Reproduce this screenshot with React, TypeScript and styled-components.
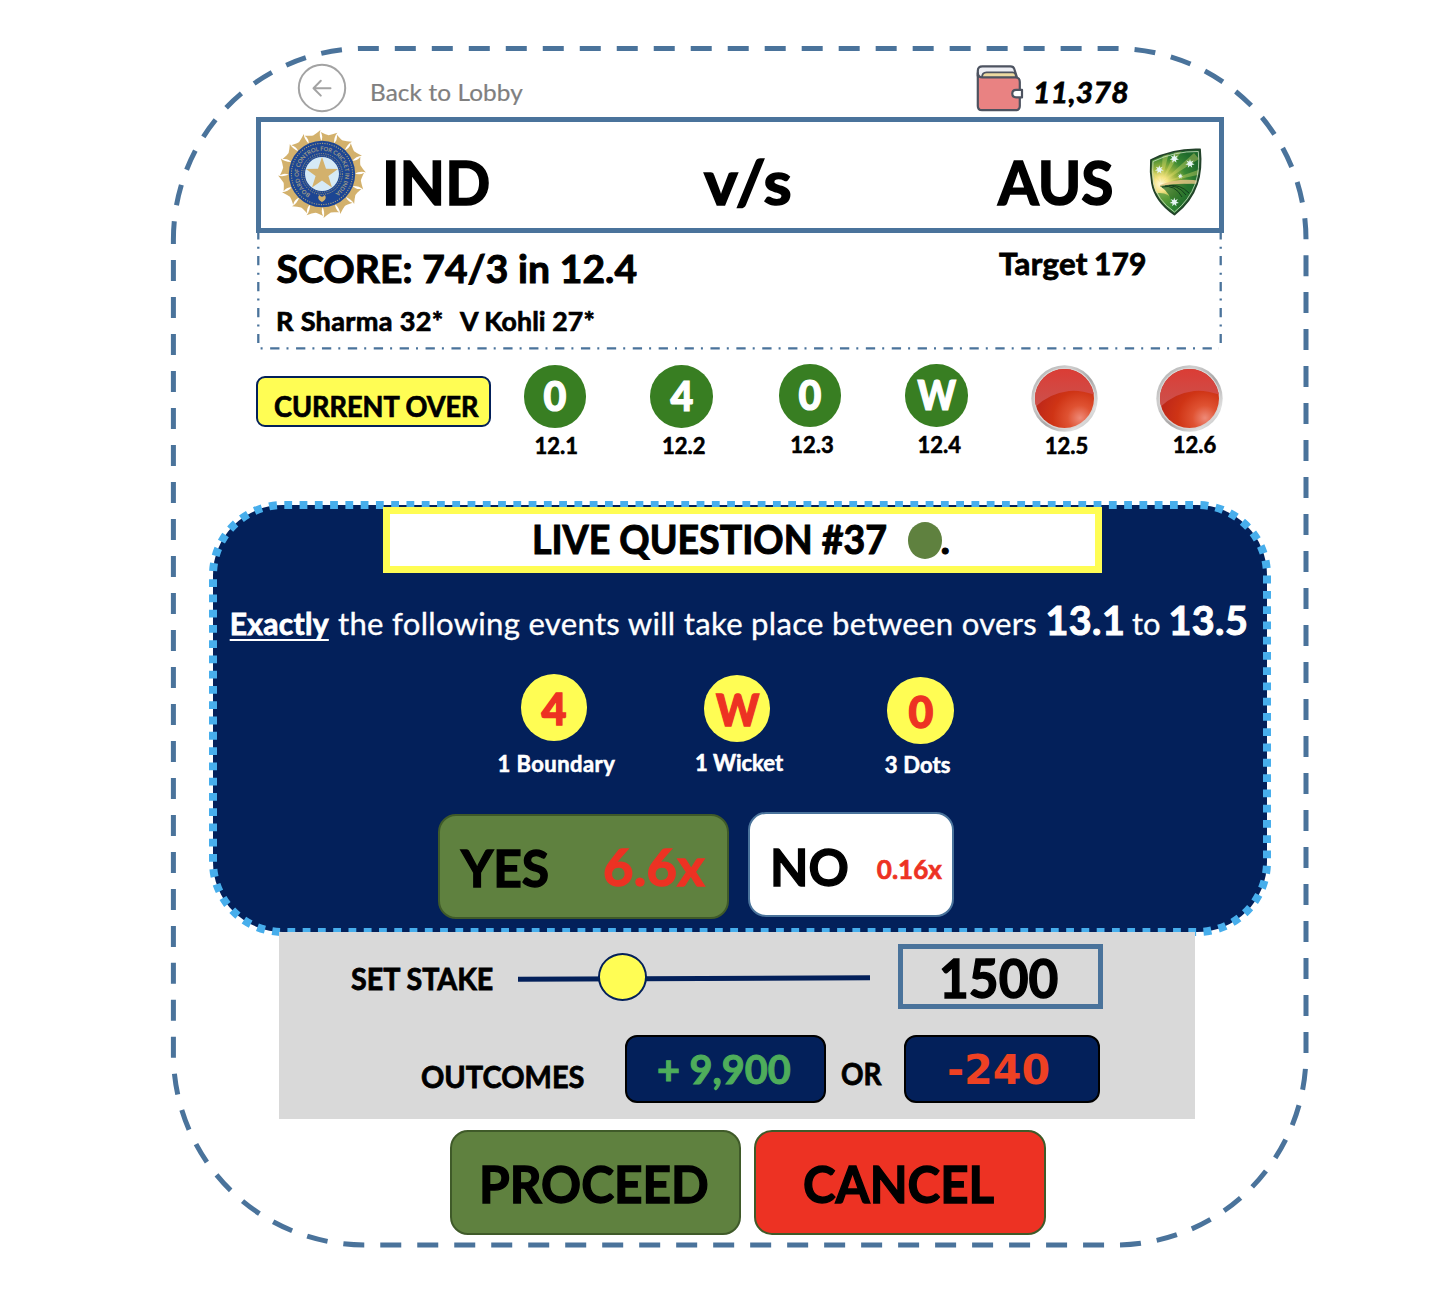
import React from "react";
import styled, { createGlobalStyle } from "styled-components";

const c = {
  steel: "#4a739b",
  navy: "#03205a",
  sky: "#47aeec",
  yellow: "#fffd54",
  red: "#ed3223",
  green: "#5f813f",
  greenEdge: "#3f5a29",
  ball: "#387e22",
  grey: "#d9d9d9",
};

const Global = createGlobalStyle`
  * { box-sizing: border-box; }
  body { margin: 0; background: #fff; color: #000; font-family: Lato, Carlito, sans-serif; }
`;

const Page = styled.main`
  position: relative;
  width: 1450px;
  height: 1316px;
  padding-top: 64px;
  overflow: hidden;
  display: flex;
  flex-direction: column;
  align-items: flex-start;
`;

const Outline = styled.svg`
  position: absolute;
  left: 0;
  top: 0;
  overflow: visible;
  pointer-events: none;
`;

interface LabelProps {
  $size: number;
  $slot?: number;
  $mt?: number;
  $ml?: number;
  $track?: number;
  $squeeze?: number;
  $color?: string;
  $weight?: number;
}

/* A single line of text; $slot fixes the room it takes up in its row. */
const Label = styled.span<LabelProps>`
  display: block;
  flex: none;
  width: ${(p) => (p.$slot ? `${p.$slot}px` : "auto")};
  margin: ${(p) => p.$mt ?? 0}px 0 0 ${(p) => p.$ml ?? 0}px;
  font-size: ${(p) => p.$size}px;
  line-height: 1;
  font-weight: ${(p) => p.$weight ?? 700};
  -webkit-text-stroke: ${(p) => (p.$weight === 400 ? 0.01 : 0.026)}em currentColor;
  letter-spacing: ${(p) => p.$track ?? 0}px;
  color: ${(p) => p.$color ?? "#000"};
  white-space: pre;
  transform: ${(p) => (p.$squeeze ? `scaleX(${p.$squeeze})` : "none")};
  transform-origin: left center;
`;

const Italic = styled(Label)`
  font-style: italic;
`;

const TopBar = styled.header`
  display: flex;
  align-items: flex-start;
  height: 53px;
  margin-left: 298px;
`;

const Icon = styled.svg<{ $mt?: number; $ml?: number }>`
  display: block;
  flex: none;
  overflow: visible;
  margin: ${(p) => p.$mt ?? 0}px 0 0 ${(p) => p.$ml ?? 0}px;
`;

const MatchBar = styled.section`
  display: flex;
  align-items: flex-start;
  width: 967.5px;
  height: 116px;
  margin-left: 256px;
  border: 5px solid ${c.steel};
`;

const ScoreBox = styled.section`
  position: relative;
  display: flex;
  align-items: flex-start;
  width: 967px;
  height: 117px;
  margin-left: 256px;
  padding: 15px 0 0 20.5px;
`;

const ScoreColumn = styled.div`
  width: 722.5px;
`;

const Line = styled.div`
  display: flex;
  align-items: flex-start;
`;

const OverRow = styled.section`
  display: flex;
  align-items: flex-start;
  height: 155.3px;
  margin-left: 256px;
`;

const OverBadge = styled.div`
  width: 235px;
  height: 50.5px;
  margin-top: 26px;
  padding: 14px 0 0 16px;
  border: 2px solid ${c.navy};
  border-radius: 9px;
  background: ${c.yellow};
`;

const Delivery = styled.div<{ $ml: number; $mt: number; $w: number }>`
  display: flex;
  flex-direction: column;
  align-items: center;
  width: ${(p) => p.$w}px;
  margin: ${(p) => p.$mt}px 0 0 ${(p) => p.$ml}px;
`;

const Disc = styled.div<{ $d: number; $bg: string; $color: string; $size: number; $pt: number; $squeeze: number }>`
  display: flex;
  justify-content: center;
  align-items: flex-start;
  width: ${(p) => p.$d}px;
  height: ${(p) => p.$d}px;
  padding-top: ${(p) => p.$pt}px;
  border-radius: 50%;
  background: ${(p) => p.$bg};
  color: ${(p) => p.$color};
  font-size: ${(p) => p.$size}px;
  font-weight: 700;
  line-height: 1;
  -webkit-text-stroke: 0.03em currentColor;
  & > b {
    transform: scaleX(${(p) => p.$squeeze});
  }
`;

const Caption = styled.div<{ $mt: number; $shift: number; $track?: number; $color?: string }>`
  margin: ${(p) => p.$mt}px 0 0 ${(p) => p.$shift * 2}px;
  font-size: 22px;
  font-weight: 700;
  line-height: 1;
  -webkit-text-stroke: 0.026em currentColor;
  letter-spacing: ${(p) => p.$track ?? 0}px;
  color: ${(p) => p.$color ?? "#000"};
  white-space: nowrap;
`;

const Question = styled.section`
  position: relative;
  width: 1054px;
  height: 427.2px;
  margin-left: 213px;
  border-radius: 70px;
  background: ${c.navy};
`;

const Title = styled.div`
  position: relative;
  display: flex;
  align-items: flex-start;
  width: 719px;
  height: 66px;
  margin-left: 170.3px;
  top: 2.2px;
  padding-left: 142px;
  border: 7.5px solid ${c.yellow};
  background: #fff;
`;

const LiveDot = styled.i`
  display: block;
  width: 34px;
  height: 36.5px;
  margin-top: 8px;
  border-radius: 50%;
  background: ${c.green};
`;

const Sentence = styled.p`
  display: flex;
  align-items: baseline;
  margin: 28.7px 0 0 16.7px;
  height: 40px;
`;

const Underlined = styled(Label)`
  text-decoration: underline;
  text-decoration-thickness: 2.3px;
  text-underline-offset: 4px;
  text-decoration-skip-ink: none;
`;

const Events = styled.div`
  display: flex;
  align-items: flex-start;
  height: 139px;
  margin: 34.5px 0 0 307.8px;
`;

const Choices = styled.div`
  display: flex;
  align-items: flex-start;
  margin-left: 224.5px;
`;

const Button = styled.div<{ $w: number; $bg: string; $edge: string; $ml?: number; $mt?: number }>`
  display: flex;
  align-items: flex-start;
  flex: none;
  width: ${(p) => p.$w}px;
  height: 105px;
  margin: ${(p) => p.$mt ?? 0}px 0 0 ${(p) => p.$ml ?? 0}px;
  border: 2.5px solid ${(p) => p.$edge};
  border-radius: 18px;
  background: ${(p) => p.$bg};
`;

const StakePanel = styled.section`
  position: relative;
  width: 915.7px;
  height: 187px;
  margin-left: 279px;
  background: ${c.grey};
`;

const StakeRow = styled.div`
  display: flex;
  align-items: flex-start;
  height: 102.5px;
  padding: 11.5px 0 0 72px;
`;

const Slider = styled.div`
  position: relative;
  width: 352px;
  height: 48px;
  margin-top: 9.5px;
`;

const Rail = styled.div`
  height: 5px;
  margin-top: 22.5px;
  background: ${c.navy};
  transform: rotate(-0.25deg);
`;

const Thumb = styled.div`
  position: absolute;
  left: 79.5px;
  top: -0.5px;
  width: 49.5px;
  height: 48px;
  border: 2px solid ${c.navy};
  border-radius: 50%;
  background: ${c.yellow};
`;

const StakeValue = styled.div`
  width: 205px;
  height: 65px;
  margin-left: 27.5px;
  padding: 2.5px 0 0 36.5px;
  border: 5px solid ${c.steel};
`;

const OutcomeRow = styled.div`
  display: flex;
  align-items: flex-start;
  padding-left: 142px;
`;

const Outcome = styled.div<{ $w: number }>`
  flex: none;
  width: ${(p) => p.$w}px;
  height: 68px;
  border: 2px solid #000;
  border-radius: 12px;
  background: ${c.navy};
`;

const Loss = styled(Label)`
  font-family: "DejaVu Sans", Verdana, sans-serif;
  -webkit-text-stroke: 0;
`;

const Actions = styled.footer`
  display: flex;
  margin: 10.5px 0 0 450px;
`;

const goldPetals = Array.from({ length: 16 }, (_, i) => i * 22.5 + 10);

const IndiaCrest = () => (
  <Icon width="88" height="88" viewBox="-44 -44 88 88" $ml={17} $mt={8}>
    {goldPetals.map((a) => (
      <path
        key={a}
        transform={`rotate(${a})`}
        d="M-8.6-41.2Q-2.500-39.400-.3-39.400Q3-40.500 8-43.200Q5-38.500 6.800-31H-6.800Q-4.600-37-8.600-41.200Z"
        fill="#d3b16c"
      />
    ))}
    <circle r="33.2" fill="#1d4693" />
    <circle r="30.6" fill="none" stroke="#a99f7b" strokeWidth="1.1" strokeDasharray="1.1 1.3" />
    <circle r="20.4" fill="none" stroke="#a99f7b" strokeWidth="1" strokeDasharray="1.1 1.2" />
    <circle r="18.3" fill="none" stroke="#a99f7b" strokeWidth=".8" strokeDasharray="1.1 1.2" />
    <circle r="17" fill="#d6eaf6" />
    <path d="M0-17 4-5.3 16-5.1 6.4 2 10 13.4 0 6.5-10 13.4-6.4 2-16-5.1-4-5.3Z" fill="#d3b16c" />
    <path id="crest-arc" d="M-11.6 20.1A23.2 23.2 0 1 1 11.6 20.1" fill="none" />
    <text fontSize="5.8" fontWeight="700" fill="#9d9a86">
      <textPath href="#crest-arc" textLength="119" lengthAdjust="spacing">
        BOARD OF CONTROL FOR CRICKET IN INDIA
      </textPath>
    </text>
    <path d="M0 28C-5 26-4 21.5-2.4 21.3Q-1 22.8 0 22.8T2.4 21.3C4 21.5 5 26 0 28Z" fill="#d3b16c" />
  </Icon>
);

const sparkle = "M0-4.6.9-1.8 3.6-2.9 2-.5 4.6 1 1.7 1.4 2.2 4.2 0 2.3-2.2 4.2-1.7 1.4-4.6 1-2-.5-3.6-2.9-.9-1.8Z";

const AustraliaCrest = () => (
  <Icon width="58" height="74" viewBox="0 0 58 74" $mt={23}>
    <defs>
      <radialGradient id="dawn" gradientUnits="userSpaceOnUse" cx="15" cy="39" r="40">
        <stop offset="0" stopColor="#fffbe0" />
        <stop offset=".18" stopColor="#f6e487" />
        <stop offset=".4" stopColor="#9db53f" />
        <stop offset=".66" stopColor="#3c8a33" />
        <stop offset="1" stopColor="#1e6a2c" />
      </radialGradient>
      <clipPath id="shield">
        <path d="M5 15Q28 3.500 54 4.500Q56 24 51 39Q45 57 28.500 69.500Q9 56 6 38Q4 27 5 15Z" />
      </clipPath>
    </defs>
    <g clipPath="url(#shield)">
      <rect width="58" height="74" fill="url(#dawn)" />
      <path
        d="M15 38 17 5 24 4ZM15 38 30 4 37 4ZM15 38 48 8 53 14ZM15 38 4 20 4 27ZM15 38 55 24 56 29Z"
        fill="#e9e26f"
        opacity=".36"
      />
      <path d="M14 40Q34 32 54 36V39Q34 38 14 42Z" fill="#dfc184" opacity=".85" />
      <path d="M14 41Q36 37 55 40V74H24Q31 52 14 41Z" fill="#1f6b2b" opacity=".72" />
      <path d="M4 50Q20 44 28 56T28 74H4Z" fill="#2e8a34" opacity=".6" />
      <path
        d="M16 42Q29 39 36 52M19 41Q32 39 40 50M23 40.500Q34 39 43 48"
        fill="none"
        stroke="#123f1c"
        strokeWidth="1"
      />
    </g>
    <path
      d="M5 15Q28 3.500 54 4.500Q56 24 51 39Q45 57 28.500 69.500Q9 56 6 38Q4 27 5 15Z"
      fill="none"
      stroke="#23422a"
      strokeWidth="1.800"
    />
    <path
      d="M7 16.500Q29 6 52.300 6.500Q54 24 49.400 38.500Q43.500 55 28.500 67Q10.500 54.500 7.800 38Q6 28 7 16.500Z"
      fill="none"
      stroke="#cfe0c4"
      strokeWidth=".8"
    />
    {[
      [28.3, 13.5, 1],
      [44, 18.5, 1],
      [13.3, 24.5, 0.95],
      [34.3, 31, 0.6],
      [28.3, 57, 1],
    ].map(([x, y, s]) => (
      <path key={`${x}${y}`} d={sparkle} transform={`translate(${x} ${y}) scale(${s})`} fill="#e6f6f5" />
    ))}
  </Icon>
);

const RedLamp = ({ id }: { id: string }) => (
  <Icon width="67" height="67" viewBox="0 0 67 67">
    <defs>
      <linearGradient id={`${id}rim`} x1="0" y1="0" x2="1" y2="1">
        <stop offset="0" stopColor="#a9a9a9" />
        <stop offset=".3" stopColor="#cfcfcf" />
        <stop offset=".55" stopColor="#a8a6a6" />
        <stop offset=".8" stopColor="#e0e0e0" />
        <stop offset="1" stopColor="#a5a5a5" />
      </linearGradient>
      <radialGradient id={`${id}glow`} gradientUnits="userSpaceOnUse" cx="49" cy="53" r="42">
        <stop offset="0" stopColor="#ee8a78" />
        <stop offset=".3" stopColor="#df5232" />
        <stop offset=".65" stopColor="#cf3415" />
        <stop offset="1" stopColor="#c02918" />
      </radialGradient>
      <linearGradient id={`${id}gloss`} x1="0" y1="0" x2="0" y2="1">
        <stop offset="0" stopColor="#dc3a32" />
        <stop offset=".4" stopColor="#d5453f" />
        <stop offset="1" stopColor="#c9544f" />
      </linearGradient>
      <clipPath id={`${id}clip`}>
        <circle cx="33.500" cy="33.500" r="29.500" />
      </clipPath>
    </defs>
    <circle cx="33.500" cy="33.500" r="33.200" fill={`url(#${id}rim)`} />
    <circle cx="33.500" cy="33.500" r="30.800" fill="#d9d4d3" />
    <circle cx="33.500" cy="33.500" r="29.500" fill={`url(#${id}glow)`} />
    <path d="M0 47Q14 29 38 26Q50 24.500 67 31V0H0Z" fill={`url(#${id}gloss)`} clipPath={`url(#${id}clip)`} />
  </Icon>
);

const Wallet = () => (
  <Icon width="47" height="48" viewBox="0 0 47 48" fill="none" stroke="#4d5360" strokeWidth="2.200" strokeLinejoin="round" strokeLinecap="round">
    <path d="M1.800 12V7Q1.800 2.400 6.500 2.400H34.500Q37.500 2.400 38.300 5L41 13.500H5Z" fill="#eeeff4" />
    <path d="M6 13.500Q6 8.300 10.500 8.300H36.500Q38.800 8.300 39.300 10L40.400 13.500Z" fill="#ecd9a0" strokeWidth="1.800" />
    <path d="M1.800 9Q2.200 13.500 6.500 13.500H39.500Q43.800 13.500 43.800 18V42Q43.800 46.200 39.600 46.200H6Q1.800 46.200 1.800 42Z" fill="#e98282" />
    <path d="M46 25.800H40Q36.300 25.800 36.300 29.600T40 33.400H46Z" fill="#fff" />
  </Icon>
);

const delivered = [
  { text: "0", over: "12.1", ml: 33, mt: 15.4, cap: 7.6, shift: 1.2, sq: 0.96 },
  { text: "4", over: "12.2", ml: 64, mt: 15.4, cap: 7.1, shift: 2.4, sq: 0.96 },
  { text: "0", over: "12.3", ml: 66, mt: 14, cap: 7.9, shift: 2.2, sq: 0.96 },
  { text: "W", over: "12.4", ml: 64.3, mt: 14, cap: 7.9, shift: 3, sq: 0.89 },
];

const events = [
  { text: "4", label: "1 Boundary", ml: 0, mt: 0, pt: 11.6, cap: 11.9, shift: 2.3, sq: 0.97, track: 0.45 },
  { text: "W", label: "1 Wicket", ml: 116.5, mt: 1, pt: 11.4, cap: 10.3, shift: 2, sq: 0.92, track: 0 },
  { text: "0", label: "3 Dots", ml: 117, mt: 3, pt: 11.4, cap: 10, shift: -2.8, sq: 0.96, track: 0.14 },
];

export default function App() {
  return (
    <Page>
      <Global />
      <Outline width="1450" height="1316">
        <path
          d="M173.400 239.500A191 191 0 0 1 364.400 48.500H1115A191 191 0 0 1 1306 239.500V1054A191 191 0 0 1 1115 1245H364.400A191 191 0 0 1 173.400 1054Z"
          fill="none"
          stroke={c.steel}
          strokeWidth="5"
          strokeDasharray="21 15.990"
          strokeDashoffset="2.600"
        />
      </Outline>

      <TopBar>
        <Icon width="48" height="48" viewBox="0 0 48 48" fill="none" stroke="#a3a3a3" strokeWidth="2">
          <circle cx="24" cy="24" r="23.200" />
          <path d="M32.500 24.200H15.800M22.800 16.800 15.500 24.200 22.800 31.600" strokeLinejoin="round" strokeLinecap="round" />
        </Icon>
        <Label $size={24} $weight={400} $color="#7f7f7f" $slot={606.5} $ml={23.5} $mt={15.6} $track={0.1} $squeeze={1.015}>
          Back to Lobby
        </Label>
        <Wallet />
        <Italic $size={29} $ml={9.5} $mt={12.8} $track={0.3} $squeeze={1.035}>
          11,378
        </Italic>
      </TopBar>

      <MatchBar>
        <IndiaCrest />
        <Label $size={61} $slot={322.5} $ml={16} $mt={28.9} $squeeze={0.971}>
          IND
        </Label>
        <Label $size={61} $slot={294.5} $ml={-0.7} $mt={28.9} $track={0.5} $squeeze={1.05}>
          v/s
        </Label>
        <Label $size={61} $slot={147.5} $mt={28.9} $squeeze={0.962}>
          AUS
        </Label>
        <AustraliaCrest />
      </MatchBar>

      <ScoreBox>
        <Outline width="967" height="117" fill="none" stroke={c.steel} strokeWidth="2.300">
          <path d="M2.300 0V110M964.700 0V110" strokeDasharray="9.300 7.300 2 7.350" strokeDashoffset="2.900" />
          <path d="M4.600 115.300H963" strokeDasharray="2 7.550 9.300 7.050" />
        </Outline>
        <ScoreColumn>
          <Label $size={39} $mt={1} $track={0.08}>
            SCORE: 74/3 in 12.4
          </Label>
          <Line>
            <Label $size={26} $slot={184} $mt={19.7} $ml={-1} $track={0.3} $squeeze={1.042}>
              R Sharma 32*
            </Label>
            <Label $size={26} $mt={19.7} $track={0.1} $squeeze={1.025}>
              V Kohli 27*
            </Label>
          </Line>
        </ScoreColumn>
        <Label $size={30} $slot={95} $mt={-0.5} $track={0.3} $squeeze={1.04}>
          Target
        </Label>
        <Label $size={30} $mt={-0.5} $track={0.1}>
          179
        </Label>
      </ScoreBox>

      <OverRow>
        <OverBadge>
          <Label $size={28} $squeeze={0.968}>
            CURRENT OVER
          </Label>
        </OverBadge>
        {delivered.map((b) => (
          <Delivery key={b.over} $w={62.3} $ml={b.ml} $mt={b.mt}>
            <Disc $d={62.5} $bg={c.ball} $color="#fff" $size={41} $pt={9.8} $squeeze={b.sq}>
              <b>{b.text}</b>
            </Disc>
            <Caption $mt={b.cap} $shift={b.shift}>
              {b.over}
            </Caption>
          </Delivery>
        ))}
        <Delivery $w={67} $ml={64} $mt={15.3}>
          <RedLamp id="a" />
          <Caption $mt={3} $shift={1.6}>
            12.5
          </Caption>
        </Delivery>
        <Delivery $w={67} $ml={57.5} $mt={15.3}>
          <RedLamp id="b" />
          <Caption $mt={2.2} $shift={5}>
            12.6
          </Caption>
        </Delivery>
      </OverRow>

      <Question>
        <Outline width="1054" height="427">
          <path
            d="M0 70A70 70 0 0 1 70 0H984A70 70 0 0 1 1054 70V357A70 70 0 0 1 984 427H70A70 70 0 0 1 0 357Z"
            fill="none"
            stroke={c.sky}
            strokeWidth="8"
            strokeDasharray="7.800 7.470"
            strokeDashoffset="-4.200"
          />
        </Outline>
        <Title>
          <Label $size={40} $slot={375.5} $mt={5} $squeeze={0.938}>
            LIVE QUESTION #37
          </Label>
          <LiveDot />
          <Label $size={40} $mt={5} $ml={-1.3}>
            .
          </Label>
        </Title>
        <Sentence>
          <Underlined $size={30} $color="#fff" $slot={108.8} $track={0.3}>
            Exactly
          </Underlined>
          <Label $size={30} $color="#fff" $weight={400} $slot={707} $track={0.28} $squeeze={1.037}>
            the following events will take place between overs
          </Label>
          <Label $size={39.5} $color="#fff" $slot={86.5} $track={0.4}>
            13.1
          </Label>
          <Label $size={30} $color="#fff" $weight={400} $slot={36.5} $squeeze={1.03}>
            to
          </Label>
          <Label $size={39.5} $color="#fff" $track={0.4}>
            13.5
          </Label>
        </Sentence>
        <Events>
          {events.map((e) => (
            <Delivery key={e.label} $w={66.5} $ml={e.ml} $mt={e.mt}>
              <Disc $d={66.5} $bg={c.yellow} $color={c.red} $size={44.5} $pt={e.pt} $squeeze={e.sq}>
                <b>{e.text}</b>
              </Disc>
              <Caption $mt={e.cap} $shift={e.shift} $track={e.track} $color="#fff">
                {e.label}
              </Caption>
            </Delivery>
          ))}
        </Events>
        <Choices>
          <Button $w={291} $bg={c.green} $edge={c.greenEdge} $mt={0.3}>
            <Label $size={52} $slot={141.7} $ml={21.5} $mt={25.2} $squeeze={0.957}>
              YES
            </Label>
            <Label $size={52} $color={c.red} $mt={24.2} $track={0.3} $squeeze={1.01}>
              6.6x
            </Label>
          </Button>
          <Button $w={206} $bg="#fff" $edge={c.steel} $ml={19.3} $mt={-1.3}>
            <Label $size={52} $slot={107} $ml={20} $mt={26.3} $squeeze={0.96}>
              NO
            </Label>
            <Label $size={26} $color={c.red} $mt={42.3}>
              0.16x
            </Label>
          </Button>
        </Choices>
      </Question>

      <StakePanel>
        <StakeRow>
          <Label $size={31} $slot={167} $mt={19.5} $squeeze={0.924}>
            SET STAKE
          </Label>
          <Slider>
            <Rail />
            <Thumb />
          </Slider>
          <StakeValue>
            <Label $size={53} $squeeze={0.97}>
              1500
            </Label>
          </StakeValue>
        </StakeRow>
        <OutcomeRow>
          <Label $size={31} $slot={204} $mt={26.5} $squeeze={0.933}>
            OUTCOMES
          </Label>
          <Outcome $w={200.5}>
            <Label $size={40} $color="#4ead5b" $ml={30} $mt={12.5} $squeeze={0.99}>
              + 9,900
            </Label>
          </Outcome>
          <Label $size={31} $slot={63} $ml={15.5} $mt={23.5} $squeeze={0.9}>
            OR
          </Label>
          <Outcome $w={195.5}>
            <Loss $size={40} $color="#ee4123" $ml={41} $mt={13.3} $squeeze={1.03}>
              -240
            </Loss>
          </Outcome>
        </OutcomeRow>
      </StakePanel>

      <Actions>
        <Button $w={290.5} $bg={c.green} $edge={c.greenEdge}>
          <Label $size={52} $ml={26.5} $mt={25} $squeeze={0.954}>
            PROCEED
          </Label>
        </Button>
        <Button $w={291.5} $bg={c.red} $edge={c.greenEdge} $ml={13.5}>
          <Label $size={52} $ml={46.5} $mt={25} $squeeze={0.946}>
            CANCEL
          </Label>
        </Button>
      </Actions>
    </Page>
  );
}
